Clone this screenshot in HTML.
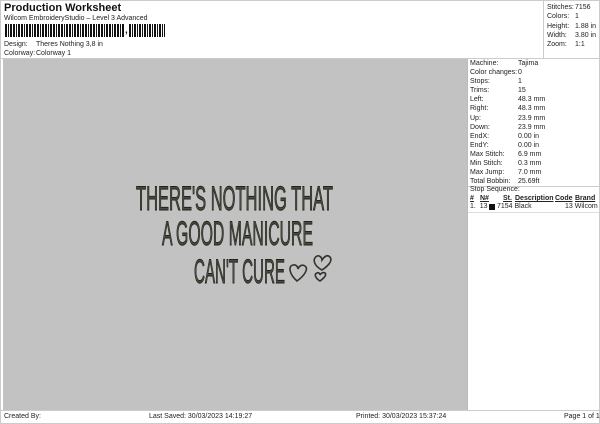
<!DOCTYPE html>
<html><head><meta charset="utf-8"><style>
*{margin:0;padding:0;box-sizing:border-box}
body{width:600px;height:424px;background:#fff;font-family:"Liberation Sans",sans-serif;color:#222;position:relative;overflow:hidden;font-size:7px}
.a{position:absolute;white-space:nowrap}
</style></head><body>
<div class="a" style="left:0;top:0;width:600px;height:424px;border:1px solid #ccc"></div>
<div class="a" style="left:4px;top:2px;font-size:11px;font-weight:bold;color:#111">Production Worksheet</div>
<div class="a" style="left:4px;top:15px;font-size:7px">Wilcom EmbroideryStudio – Level 3 Advanced</div>
<div class="a" style="left:5px;top:24px;width:120px;height:13px;background:repeating-linear-gradient(90deg,#111 0 2px,#fff 2px 3px,#111 3px 4px,#fff 4px 5px,#111 5px 7px,#fff 7px 8px)"></div>
<div class="a" style="left:125px;top:24px;font-size:10px;font-weight:bold;line-height:14px">,</div>
<div class="a" style="left:129px;top:24px;width:36px;height:13px;background:repeating-linear-gradient(90deg,#111 0 2px,#fff 2px 3px,#111 3px 4px,#fff 4px 5px)"></div>
<div class="a" style="left:4px;top:41px">Design:</div><div class="a" style="left:36px;top:41px">Theres Nothing 3,8 in</div>
<div class="a" style="left:4px;top:50px">Colorway:</div><div class="a" style="left:36px;top:50px">Colorway 1</div>
<div class="a" style="left:543px;top:0;width:1px;height:58px;background:#ccc"></div>
<div class="a" style="left:0;top:58px;width:600px;height:1px;background:#ccc"></div>
<div class="a" style="left:547px;top:3px;line-height:9.3px">Stitches:<br>Colors:<br>Height:<br>Width:<br>Zoom:</div>
<div class="a" style="left:575px;top:3px;line-height:9.3px">7156<br>1<br>1.88 in<br>3.80 in<br>1:1</div>
<div class="a" style="left:3px;top:59px;width:464px;height:351px;background:#c2c2c2"></div>
<div class="a" style="left:467px;top:59px;width:1px;height:351px;background:#bbb"></div>
<div class="a" style="left:470px;top:59px;line-height:9.1px">Machine:<br>Color changes:<br>Stops:<br>Trims:<br>Left:<br>Right:<br>Up:<br>Down:<br>EndX:<br>EndY:<br>Max Stitch:<br>Min Stitch:<br>Max Jump:<br>Total Bobbin:</div>
<div class="a" style="left:518px;top:59px;line-height:9.1px">Tajima<br>0<br>1<br>15<br>48.3 mm<br>48.3 mm<br>23.9 mm<br>23.9 mm<br>0.00 in<br>0.00 in<br>6.9 mm<br>0.3 mm<br>7.0 mm<br>25.69ft</div>
<div class="a" style="left:468px;top:186px;width:131px;height:1px;background:#ccc"></div>
<div class="a" style="left:470px;top:186px">Stop Sequence:</div>
<div class="a" style="left:470px;top:195px;font-weight:bold;text-decoration:underline">#</div>
<div class="a" style="left:480px;top:195px;font-weight:bold;text-decoration:underline">N#</div>
<div class="a" style="left:503px;top:195px;font-weight:bold;text-decoration:underline">St.</div>
<div class="a" style="left:515px;top:195px;font-weight:bold;text-decoration:underline">Description</div>
<div class="a" style="left:555px;top:195px;font-weight:bold;text-decoration:underline">Code</div>
<div class="a" style="left:575px;top:195px;font-weight:bold;text-decoration:underline">Brand</div>
<div class="a" style="left:470px;top:203px">1.&nbsp; 13</div>
<div class="a" style="left:489px;top:204px;width:6px;height:6px;background:#111"></div>
<div class="a" style="left:497px;top:203px">7154 Black</div>
<div class="a" style="left:565px;top:203px">13 Wilcom</div>
<div class="a" style="left:468px;top:212px;width:131px;height:1px;background:#ddd"></div>
<div class="a" style="left:0;top:410px;width:600px;height:1px;background:#ccc"></div>
<div class="a" style="left:4px;top:413px">Created By:</div>
<div class="a" style="left:149px;top:413px">Last Saved: 30/03/2023 14:19:27</div>
<div class="a" style="left:356px;top:413px">Printed: 30/03/2023 15:37:24</div>
<div class="a" style="left:564px;top:413px">Page 1 of 1</div>
<svg class="a" style="left:0;top:0" width="600" height="424">
<g font-family="Liberation Sans" font-weight="normal" font-size="34" fill="#4a4a40" stroke="#22221c" stroke-width="0.9">
<text x="136" y="210" textLength="197" lengthAdjust="spacingAndGlyphs">THERE'S NOTHING THAT</text>
<text x="162" y="245" textLength="151" lengthAdjust="spacingAndGlyphs">A GOOD MANICURE</text>
<text x="194" y="283" textLength="91" lengthAdjust="spacingAndGlyphs">CAN'T CURE</text>
</g>
<g fill="none" stroke="#33332c" stroke-width="1.6">
<path d="M297 281 C289 274 288 266 293 265 C296 264 298 267 298 269 C299 266 302 264 305 266 C309 269 304 276 297 281Z"/>
<path d="M322 270 C314 266 312 259 317 256 C320 255 322 258 322 260 C324 257 327 254 330 257 C333 261 328 266 322 270Z"/>
<path d="M320 281 C315 278 314 274 317 273 C319 272 320 274 320 275 C321 273 323 272 325 273 C327 275 324 278 320 281Z"/>
</g>
</svg>
</body></html>
